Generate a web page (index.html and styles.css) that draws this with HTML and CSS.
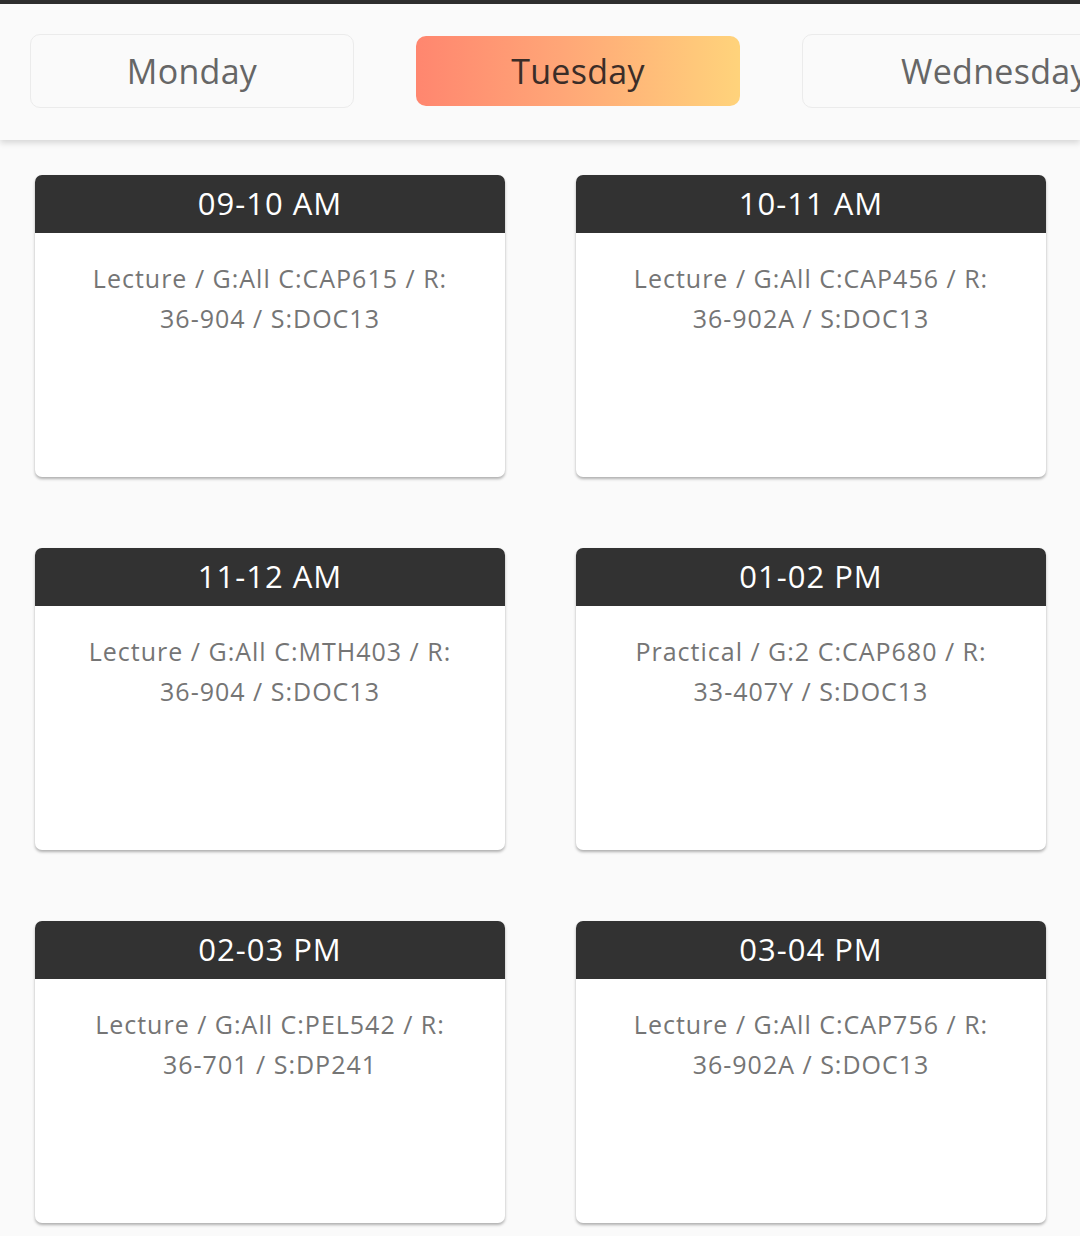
FILE: index.html
```html
<!DOCTYPE html>
<html>
<head>
<meta charset="utf-8">
<link rel="stylesheet" href="styles.css">
</head>
<body>
<div class="topline"></div>
<header class="days">
  <div class="day">Monday</div>
  <div class="day active">Tuesday</div>
  <div class="day wide">Wednesday</div>
</header>
<main class="grid">
  <div class="card"><div class="time">09-10 AM</div><div class="info">Lecture / G:All C:CAP615 / R: <span class="nw">36-904</span> / S:DOC13</div></div>
  <div class="card"><div class="time">10-11 AM</div><div class="info">Lecture / G:All C:CAP456 / R: <span class="nw">36-902A</span> / S:DOC13</div></div>
  <div class="card"><div class="time">11-12 AM</div><div class="info">Lecture / G:All C:MTH403 / R: <span class="nw">36-904</span> / S:DOC13</div></div>
  <div class="card"><div class="time">01-02 PM</div><div class="info">Practical / G:2 C:CAP680 / R: <span class="nw">33-407Y</span> / S:DOC13</div></div>
  <div class="card"><div class="time">02-03 PM</div><div class="info">Lecture / G:All C:PEL542 / R: <span class="nw">36-701</span> / S:DP241</div></div>
  <div class="card"><div class="time">03-04 PM</div><div class="info">Lecture / G:All C:CAP756 / R: <span class="nw">36-902A</span> / S:DOC13</div></div>
</main>
</body>
</html>
```
FILE: styles.css
```css
html, body {
  margin: 0;
  padding: 0;
  background: #fafafa;
  font-family: "Open Sans", "Noto Sans", sans-serif;
  overflow: hidden;
  width: 1080px;
  height: 1236px;
}
.topline {
  height: 4px;
  background: #2f2f2f;
}
.days {
  position: relative;
  z-index: 2;
  height: 136px;
  box-sizing: border-box;
  background: #fafafa;
  box-shadow: 0 3px 6px rgba(0,0,0,0.14);
  display: flex;
  align-items: center;
  gap: 62px;
  padding: 0 0 2px 30px;
  overflow: hidden;
}
.day {
  flex: 0 0 324px;
  width: 324px;
  height: 74px;
  box-sizing: border-box;
  border: 1px solid #ebebeb;
  border-radius: 10px;
  display: flex;
  align-items: center;
  justify-content: center;
  font-size: 34px;
  letter-spacing: 0.3px;
  color: #666;
  white-space: nowrap;
}
.day.wide {
  flex: 0 0 auto;
  width: auto;
  padding: 0 96px 0 98px;
}
.day.active {
  height: 70px;
  border: none;
  background: linear-gradient(90deg, #ff866f 0%, #ffa677 45%, #ffd37b 100%);
  color: #3b2d28;
}
.grid {
  display: grid;
  grid-template-columns: 470px 470px;
  column-gap: 71px;
  row-gap: 71px;
  padding: 35px 0 0 35px;
}
.card {
  height: 302px;
  background: #fff;
  border-radius: 7px;
  overflow: hidden;
  box-shadow: 0 2px 3px rgba(0,0,0,0.3);
}
.time {
  height: 58px;
  background: #323232;
  color: #fff;
  font-size: 31px;
  letter-spacing: 1px;
  line-height: 56px;
  text-align: center;
}
.info {
  padding: 25px 30px 0;
  font-size: 25px;
  letter-spacing: 1px;
  line-height: 40px;
  color: #757575;
  text-align: center;
}
.nw {
  white-space: nowrap;
}
```
